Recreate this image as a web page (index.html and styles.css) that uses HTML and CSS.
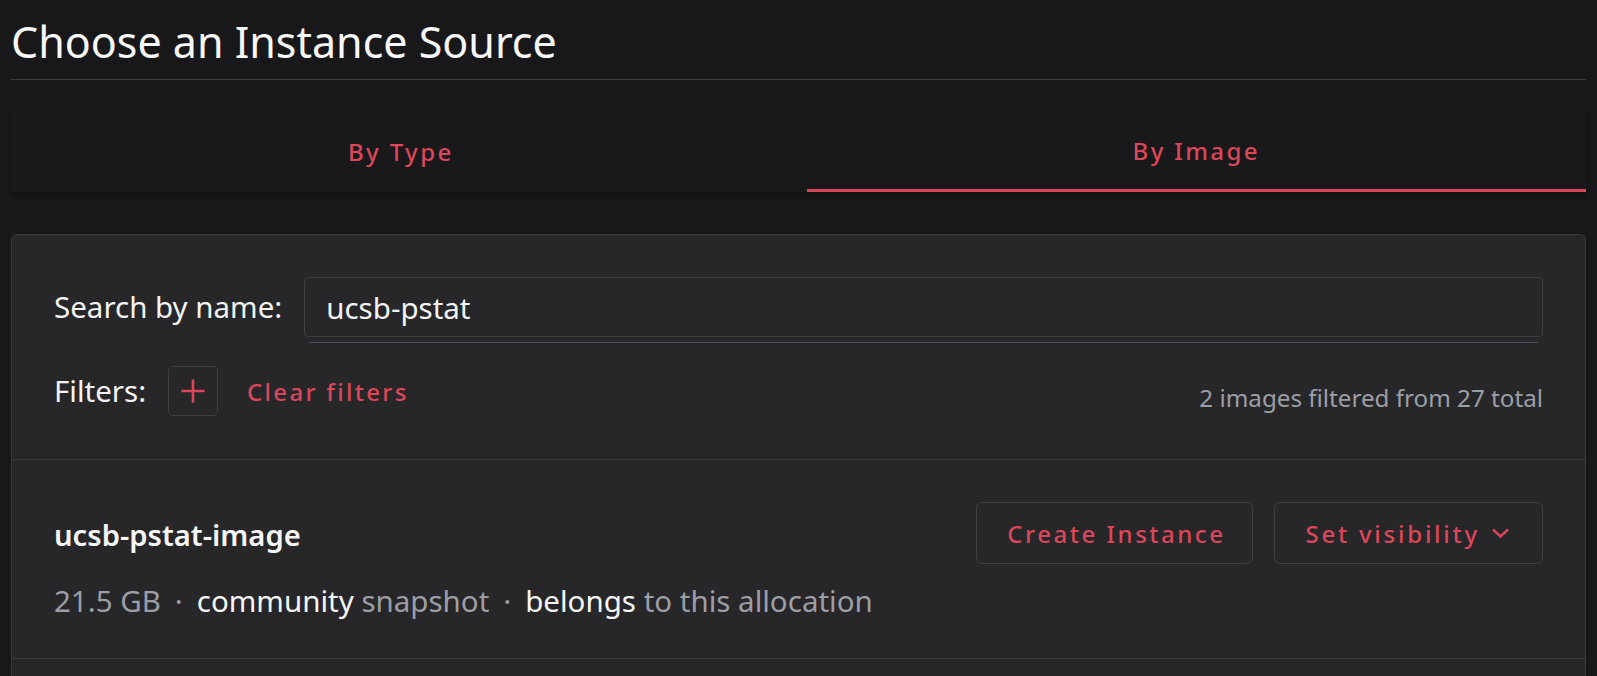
FILE: index.html
```html
<!DOCTYPE html>
<html lang="en">
<head>
<meta charset="utf-8">
<title>Choose an Instance Source</title>
<link rel="stylesheet" href="styles.css">
</head>
<body>
<div class="page">
  <h1 class="title">Choose an Instance Source</h1>

  <div class="tabs">
    <div class="tab">By Type</div>
    <div class="tab tab-active">By Image</div>
  </div>

  <div class="card">
    <div class="card-head">
      <div class="search-row">
        <label class="label" for="search">Search by name:</label>
        <div class="search-wrap">
          <input class="search-input" id="search" type="text" value="ucsb-pstat">
          <div class="search-line"></div>
        </div>
      </div>
      <div class="filter-row">
        <span class="label">Filters:</span>
        <button class="add-btn" type="button" aria-label="Add filter">
          <svg width="24" height="24" viewBox="0 0 24 24"><path d="M12 0.5v23M0.5 12h23" stroke="currentColor" stroke-width="2.6" fill="none"/></svg>
        </button>
        <span class="link">Clear filters</span>
        <span class="count">2 images filtered from 27 total</span>
      </div>
    </div>

    <div class="item">
      <div class="item-top">
        <div class="item-name">ucsb-pstat-image</div>
        <div class="actions">
          <button class="btn" type="button">Create Instance</button>
          <button class="btn btn-menu" type="button">Set visibility
            <svg class="chev" width="17" height="10" viewBox="0 0 17 10"><path d="M1 1.5l7.5 7 7.5-7" stroke="currentColor" stroke-width="2.4" fill="none"/></svg>
          </button>
        </div>
      </div>
      <div class="meta">
        <span class="muted">21.5 GB</span><span class="dot">·</span><span class="strong">community</span><span class="muted"> snapshot</span><span class="dot">·</span><span class="strong">belongs</span><span class="muted"> to this allocation</span>
      </div>
    </div>
    <div class="item item-empty"></div>
  </div>
</div>
</body>
</html>
```

FILE: styles.css
```css
* { box-sizing: border-box; }

html, body {
  margin: 0;
  padding: 0;
  background: #18181a;
  height: 100%;
  overflow: hidden;
}

body {
  font-family: "Noto Sans", "Open Sans", sans-serif;
  color: #f2f2f3;
}

.page {
  padding: 0 11px;
}

.title {
  margin: 0;
  padding: 13px 0 8px;
  font-size: 43px;
  font-weight: 400;
  line-height: 1.36;
  color: #f8f8f9;
  border-bottom: 1px solid #3c3c40;
}

.tabs {
  margin-top: 31px;
  display: grid;
  grid-template-columns: 1fr 1fr;
  column-gap: 16px;
  background: #19191b;
  box-shadow: 0 2px 4px rgba(0, 0, 0, 0.35);
  height: 81px;
}

.tab {
  display: flex;
  align-items: center;
  justify-content: center;
  font-size: 24px;
  font-weight: 500;
  letter-spacing: 0.1em;
  color: #dc4658;
  border-bottom: 3px solid transparent;
  padding-top: 3px;
}

.tab-active {
  border-bottom-color: #dc4658;
  padding-top: 0;
}

.card {
  margin-top: 42px;
  background: #27272a;
  border: 1px solid #3a3a3e;
  border-radius: 6px;
  min-height: 600px;
}

.card-head {
  padding: 42px 42px 43px;
  border-bottom: 1px solid #3a3a3e;
}

.search-row {
  display: flex;
  align-items: flex-start;
  gap: 22px;
}

.label {
  font-size: 29.5px;
  color: #f4f4f5;
  line-height: 60px;
  white-space: nowrap;
}

.search-wrap {
  flex: 1;
  display: flex;
  flex-direction: column;
}

.search-input {
  height: 60px;
  width: 100%;
  background: #27272a;
  border: 1px solid #3e3e43;
  border-radius: 4px;
  padding: 0 21px;
  font-family: inherit;
  font-size: 29.5px;
  color: #f4f4f5;
  outline: none;
}

.search-line {
  height: 1px;
  margin: 5px 5px 0;
  background: #4b5268;
}

.filter-row {
  margin-top: 23px;
  display: flex;
  align-items: center;
}

.filter-row .label {
  line-height: 50px;
}

.add-btn {
  margin-left: 22px;
  width: 50px;
  height: 50px;
  background: transparent;
  border: 1px solid #3e3e43;
  border-radius: 5px;
  color: #dc4658;
  display: flex;
  align-items: center;
  justify-content: center;
  padding: 0;
}

.link {
  margin-left: 29px;
  font-size: 24px;
  font-weight: 500;
  letter-spacing: 0.095em;
  color: #dc4658;
}

.count {
  margin-left: auto;
  align-self: flex-end;
  font-size: 24.2px;
  color: #9c9ea6;
  margin-bottom: 2px;
}

.item {
  padding: 42px 42px 36px;
  border-bottom: 1px solid #3a3a3e;
}

.item-top {
  display: flex;
  align-items: center;
  justify-content: space-between;
}

.item-name {
  font-size: 29.2px;
  font-weight: 600;
  color: #f6f6f7;
  margin-top: 4px;
}

.actions {
  display: flex;
  gap: 21px;
}

.btn {
  height: 62px;
  padding: 0 27px 0 30px;
  background: transparent;
  border: 1px solid #3e3e43;
  border-radius: 6px;
  font-family: inherit;
  font-size: 24px;
  font-weight: 500;
  letter-spacing: 0.105em;
  color: #dc4658;
  display: flex;
  align-items: center;
  gap: 12px;
}

.btn-menu {
  padding-right: 33px;
  letter-spacing: 0.115em;
}

.chev {
  display: block;
}

.meta {
  margin-top: 17px;
  font-size: 29.5px;
  line-height: 1.36;
}

.muted { color: #9c9ea6; }
.strong { color: #f6f6f7; }

.dot {
  color: #9c9ea6;
  margin: 0 14px;
}

.item-empty {
  border-bottom: none;
  height: 100px;
}
```
